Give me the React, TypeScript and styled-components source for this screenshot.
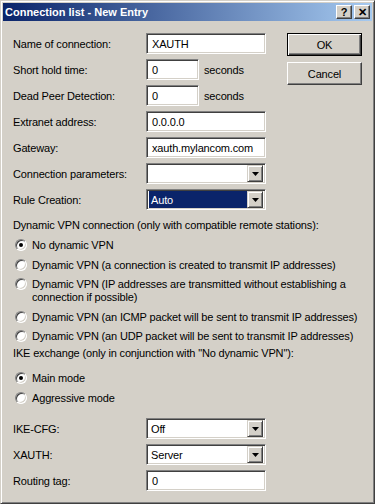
import styled, { createGlobalStyle } from "styled-components";

const face = "#d4d0c8";

const GlobalStyle = createGlobalStyle`
  html, body { margin: 0; padding: 0; background: ${face}; }
  body {
    font-family: "Liberation Sans", Arial, sans-serif;
    font-size: 11px;
    letter-spacing: -0.16px;
    color: #000;
  }
`;

const Window = styled.div`
  width: 375px;
  height: 504px;
  box-sizing: border-box;
  background: ${face};
  border: 1px solid;
  border-color: ${face} #404040 #404040 ${face};
  box-shadow: inset 1px 1px #fff, inset -1px -1px #808080;
  padding: 2px;
  display: flex;
  flex-direction: column;
  overflow: hidden;
`;

const TitleBar = styled.div`
  height: 18px;
  flex: none;
  display: flex;
  align-items: center;
  padding: 0 2px 0 2px;
  background: linear-gradient(to right, #0a246a, #a6caf0);
  color: #fff;
  font-weight: bold;
  font-size: 11px;
  letter-spacing: 0;
`;

const Title = styled.div`
  flex: 1;
`;

const TitleButton = styled.div`
  width: 16px;
  height: 14px;
  box-sizing: border-box;
  background: ${face};
  border: 1px solid;
  border-color: #fff #404040 #404040 #fff;
  box-shadow: inset -1px -1px #808080;
  display: flex;
  align-items: center;
  justify-content: center;
  color: #000;
  font-size: 11px;
  margin-left: 2px;
`;

const Body = styled.div`
  padding: 12px 10px 0 10px;
  display: flex;
  flex-direction: column;
`;

const Top = styled.div`
  display: flex;
  justify-content: space-between;
  align-items: flex-start;
`;

const Form = styled.div`
  display: grid;
  grid-template-columns: 133px 1fr;
  grid-auto-rows: 21px;
  row-gap: 5px;
  align-items: center;
`;

const Label = styled.div`
  white-space: nowrap;
`;

const FieldCell = styled.div`
  display: flex;
  align-items: center;
  gap: 5px;
`;

const Sunken = styled.div<{ $w: number }>`
  width: ${(p) => p.$w}px;
  height: 21px;
  box-sizing: border-box;
  background: #fff;
  border: 1px solid;
  border-color: #808080 #fff #fff #808080;
  box-shadow: inset 1px 1px #404040, inset -1px -1px ${face};
  padding: 2px;
  display: flex;
  align-items: center;
`;

const InputText = styled.div`
  padding-left: 3px;
  white-space: nowrap;
`;

const ComboValue = styled.div<{ $selected?: boolean }>`
  flex: 1;
  height: 17px;
  display: flex;
  align-items: center;
  padding-left: 2px;
  background: ${(p) => (p.$selected ? "#0a246a" : "#fff")};
  color: ${(p) => (p.$selected ? "#fff" : "#000")};
`;

const DropButton = styled.div`
  width: 16px;
  height: 17px;
  box-sizing: border-box;
  background: ${face};
  border: 1px solid;
  border-color: ${face} #404040 #404040 ${face};
  box-shadow: inset 1px 1px #fff, inset -1px -1px #808080;
  display: flex;
  align-items: center;
  justify-content: center;
`;

const Buttons = styled.div`
  display: flex;
  flex-direction: column;
  gap: 6px;
`;

const PushButton = styled.div<{ $default?: boolean }>`
  width: 75px;
  height: 23px;
  box-sizing: border-box;
  background: ${face};
  border: 1px solid;
  border-color: ${(p) => (p.$default ? "#000" : "#fff #404040 #404040 #fff")};
  box-shadow: ${(p) =>
    p.$default
      ? "inset 1px 1px #fff, inset -1px -1px #404040, inset -2px -2px #808080"
      : "inset -1px -1px #808080"};
  display: flex;
  align-items: center;
  justify-content: center;
`;

const Heading = styled.div<{ $mt: number }>`
  margin-top: ${(p) => p.$mt}px;
  line-height: 13px;
  white-space: nowrap;
`;

const RadioRow = styled.div<{ $mt: number }>`
  margin-top: ${(p) => p.$mt}px;
  display: flex;
  align-items: flex-start;
  padding-left: 2px;
  gap: 5px;
  line-height: 13px;
  white-space: nowrap;
`;

const RadioCircle = styled.div<{ $on?: boolean }>`
  width: 12px;
  height: 12px;
  flex: none;
  box-sizing: border-box;
  border-radius: 50%;
  background: #fff;
  border: 1px solid;
  border-color: #808080 #fff #fff #808080;
  box-shadow: inset 1px 1px #404040, inset -1px -1px ${face};
  display: flex;
  align-items: center;
  justify-content: center;
  &::after {
    content: "";
    display: ${(p) => (p.$on ? "block" : "none")};
    width: 4px;
    height: 4px;
    border-radius: 50%;
    background: #000;
  }
`;

const LowerForm = styled(Form)`
  margin-top: 13px;
`;

const Arrow = () => (
  <svg width="7" height="4" viewBox="0 0 7 4">
    <polygon points="0,0 7,0 3.5,4" fill="#000" />
  </svg>
);

const Input = ({ w, value }: { w: number; value: string }) => (
  <Sunken $w={w}>
    <InputText>{value}</InputText>
  </Sunken>
);

const Combo = ({ value, selected }: { value: string; selected?: boolean }) => (
  <Sunken $w={120}>
    <ComboValue $selected={selected}>{value}</ComboValue>
    <DropButton>
      <Arrow />
    </DropButton>
  </Sunken>
);

const Radio = ({ on, children, mt }: { on?: boolean; children: React.ReactNode; mt: number }) => (
  <RadioRow $mt={mt}>
    <RadioCircle $on={on} />
    <div>{children}</div>
  </RadioRow>
);

export default function App() {
  return (
    <>
      <GlobalStyle />
      <Window>
        <TitleBar>
          <Title>Connection list - New Entry</Title>
          <TitleButton>?</TitleButton>
          <TitleButton>✕</TitleButton>
        </TitleBar>
        <Body>
          <Top>
            <Form>
              <Label>Name of connection:</Label>
              <FieldCell><Input w={120} value="XAUTH" /></FieldCell>
              <Label>Short hold time:</Label>
              <FieldCell><Input w={53} value="0" />seconds</FieldCell>
              <Label>Dead Peer Detection:</Label>
              <FieldCell><Input w={53} value="0" />seconds</FieldCell>
              <Label>Extranet address:</Label>
              <FieldCell><Input w={120} value="0.0.0.0" /></FieldCell>
              <Label>Gateway:</Label>
              <FieldCell><Input w={120} value="xauth.mylancom.com" /></FieldCell>
              <Label>Connection parameters:</Label>
              <FieldCell><Combo value="" /></FieldCell>
              <Label>Rule Creation:</Label>
              <FieldCell><Combo value="Auto" selected /></FieldCell>
            </Form>
            <Buttons>
              <PushButton $default>OK</PushButton>
              <PushButton>Cancel</PushButton>
            </Buttons>
          </Top>

          <Heading $mt={9}>Dynamic VPN connection (only with compatible remote stations):</Heading>
          <Radio on mt={7}>No dynamic VPN</Radio>
          <Radio mt={7}>Dynamic VPN (a connection is created to transmit IP addresses)</Radio>
          <Radio mt={6}>
            Dynamic VPN (IP addresses are transmitted without establishing a
            <br />
            connection if possible)
          </Radio>
          <Radio mt={7}>Dynamic VPN (an ICMP packet will be sent to transmit IP addresses)</Radio>
          <Radio mt={6}>Dynamic VPN (an UDP packet will be sent to transmit IP addresses)</Radio>

          <Heading $mt={4}>IKE exchange (only in conjunction with "No dynamic VPN"):</Heading>
          <Radio on mt={12}>Main mode</Radio>
          <Radio mt={7}>Aggressive mode</Radio>

          <LowerForm>
            <Label>IKE-CFG:</Label>
            <FieldCell><Combo value="Off" /></FieldCell>
            <Label>XAUTH:</Label>
            <FieldCell><Combo value="Server" /></FieldCell>
            <Label>Routing tag:</Label>
            <FieldCell><Input w={120} value="0" /></FieldCell>
          </LowerForm>
        </Body>
      </Window>
    </>
  );
}
